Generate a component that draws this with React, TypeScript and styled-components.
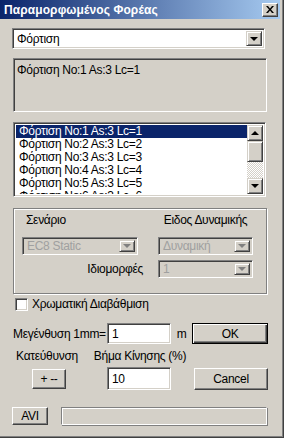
import styled, { createGlobalStyle } from 'styled-components';

const GlobalStyle = createGlobalStyle`
  html, body {
    margin: 0;
    padding: 0;
    background: #D4D0C8;
  }
  * {
    box-sizing: border-box;
  }
`

const Window = styled.div`
  width: 284px;
  height: 438px;
  background: #D4D0C8;
  font-family: "Liberation Sans", Arial, sans-serif;
  font-size: 12px;
  letter-spacing: -0.3px;
  color: #000;
  border-right: 1px solid #404040;
  border-bottom: 1px solid #404040;
  box-shadow: inset -1px -1px 0 #808080;
  padding: 0 3px 3px 0;
  display: flex;
  flex-direction: column;
  overflow: hidden;
`

const TitleBar = styled.div`
  height: 19px;
  width: 280px;
  background: linear-gradient(to right, #0A246A, #A6CAF0);
  display: flex;
  align-items: center;
  justify-content: space-between;
  padding: 0 2px 0 4px;
`

const TitleText = styled.span`
  color: #fff;
  font-weight: bold;
  font-size: 12px;
  letter-spacing: 0.1px;
`

const CloseButton = styled.div`
  width: 16px;
  height: 14px;
  background: #D4D0C8;
  border-top: 1px solid #fff;
  border-left: 1px solid #fff;
  border-right: 1px solid #404040;
  border-bottom: 1px solid #404040;
  box-shadow: inset -1px -1px 0 #808080;
  display: flex;
  align-items: center;
  justify-content: center;
`

const Body = styled.div`
  flex: 1;
  padding: 0 12px 0 12px;
  display: flex;
  flex-direction: column;
`

const Sunken = styled.div<{ $bg?: string }>`
  background: ${p => p.$bg || '#fff'};
  border-top: 1px solid #808080;
  border-left: 1px solid #808080;
  border-right: 1px solid #fff;
  border-bottom: 1px solid #fff;
  box-shadow: inset 1px 1px 0 #404040, inset -1px -1px 0 #D4D0C8;
`

const Combo = styled(Sunken)<{ $w: string; $h: number; $top?: number; $disabled?: boolean }>`
  width: ${p => p.$w};
  height: ${p => p.$h}px;
  margin-top: ${p => p.$top || 0}px;
  background: ${p => (p.$disabled ? '#D4D0C8' : '#fff')};
  color: ${p => (p.$disabled ? '#A0A0A0' : '#000')};
  display: flex;
  align-items: center;
  padding: 2px;
`

const ComboText = styled.span`
  flex: 1;
  padding-left: 2px;
  white-space: nowrap;
  overflow: hidden;
`

const ArrowButton = styled.div`
  width: 16px;
  height: 100%;
  background: #D4D0C8;
  border-top: 1px solid #D4D0C8;
  border-left: 1px solid #D4D0C8;
  border-right: 1px solid #404040;
  border-bottom: 1px solid #404040;
  box-shadow: inset 1px 1px 0 #fff, inset -1px -1px 0 #808080;
  display: flex;
  align-items: center;
  justify-content: center;
  flex-shrink: 0;
`

const Triangle = styled.div<{ $up?: boolean; $disabled?: boolean }>`
  width: 0;
  height: 0;
  border-left: 4px solid transparent;
  border-right: 4px solid transparent;
  ${p => (p.$up ? 'border-bottom' : 'border-top')}: 4px solid ${p => (p.$disabled ? '#808080' : '#000')};
`

const StaticBox = styled(Sunken)`
  height: 54px;
  margin-top: 9px;
  margin-left: 1px;
  margin-right: 1px;
  padding: 4px 3px;
`

const ListBox = styled(Sunken)`
  height: 75px;
  margin-top: 10px;
  margin-left: 1px;
  margin-right: 2px;
  padding: 2px;
  display: flex;
  overflow: hidden;
`

const ListItems = styled.div`
  flex: 1;
  overflow: hidden;
`

const ListItem = styled.div<{ $selected?: boolean }>`
  height: 13px;
  line-height: 13px;
  padding-left: 3px;
  white-space: nowrap;
  background: ${p => (p.$selected ? '#0A246A' : 'transparent')};
  color: ${p => (p.$selected ? '#fff' : '#000')};
`

const ScrollBar = styled.div`
  width: 16px;
  display: flex;
  flex-direction: column;
  background-color: #fff;
  background-image: repeating-conic-gradient(#D4D0C8 0 25%, #fff 0 50%);
  background-size: 2px 2px;
`

const ScrollButton = styled.div<{ $h: number }>`
  height: ${p => p.$h}px;
  background: #D4D0C8;
  border-top: 1px solid #D4D0C8;
  border-left: 1px solid #D4D0C8;
  border-right: 1px solid #404040;
  border-bottom: 1px solid #404040;
  box-shadow: inset 1px 1px 0 #fff, inset -1px -1px 0 #808080;
  display: flex;
  align-items: center;
  justify-content: center;
`

const ScrollTrack = styled.div`
  flex: 1;
`

const GroupBox = styled.div`
  margin-top: 11px;
  margin-left: 1px;
  margin-right: 1px;
  height: 86px;
  border: 1px solid #808080;
  box-shadow: 1px 1px 0 #fff, inset 1px 1px 0 #fff;
  padding: 4px 0 0 8px;
  display: flex;
  flex-direction: column;
`

const GroupRow = styled.div<{ $top?: number }>`
  display: flex;
  align-items: center;
  margin-top: ${p => p.$top || 0}px;
`

const GroupCell = styled.div<{ $w: number; $align?: string }>`
  width: ${p => p.$w}px;
  text-align: ${p => p.$align || 'left'};
  white-space: nowrap;
`

const Gap = styled.div<{ $w: number }>`
  width: ${p => p.$w}px;
  flex-shrink: 0;
`

const CheckRow = styled.div`
  display: flex;
  align-items: center;
  margin-top: 3px;
  padding-left: 3px;
  gap: 4px;
`

const CheckBox = styled(Sunken)`
  width: 13px;
  height: 13px;
`

const Row = styled.div<{ $top: number }>`
  display: flex;
  align-items: center;
  margin-top: ${p => p.$top}px;
`

const Label = styled.span<{ $w?: number; $align?: string; $pl?: number }>`
  width: ${p => (p.$w ? `${p.$w}px` : 'auto')};
  padding-left: ${p => p.$pl || 0}px;
  text-align: ${p => p.$align || 'left'};
  white-space: nowrap;
  flex-shrink: 0;
`

const TextInput = styled(Sunken)<{ $h: number }>`
  width: 65px;
  height: ${p => p.$h}px;
  padding: 2px 4px;
  display: flex;
  align-items: center;
`

const Button = styled.div<{ $w: number; $h: number; $default?: boolean }>`
  width: ${p => p.$w}px;
  height: ${p => p.$h}px;
  background: #D4D0C8;
  display: flex;
  align-items: center;
  justify-content: center;
  flex-shrink: 0;
  font-size: 12px;
  ${p =>
    p.$default
      ? `border: 1px solid #000;
         box-shadow: inset 1px 1px 0 #fff, inset -1px -1px 0 #404040, inset -2px -2px 0 #808080;`
      : `border-top: 1px solid #fff;
         border-left: 1px solid #fff;
         border-right: 1px solid #404040;
         border-bottom: 1px solid #404040;
         box-shadow: inset -1px -1px 0 #808080;`}
`

const ProgressBox = styled.div`
  flex: 1;
  height: 18px;
  margin-left: 13px;
  border-top: 1px solid #808080;
  border-left: 1px solid #808080;
  border-right: 1px solid #fff;
  border-bottom: 1px solid #fff;
  box-shadow: inset 1px 1px 0 #fff, 1px 1px 0 #808080;
  margin-right: 1px;
`

const loads = [1, 2, 3, 4, 5, 6]

const App = () => {
  return (
    <>
      <GlobalStyle />
      <Window>
        <TitleBar>
          <TitleText>Παραμορφωμένος Φορέας</TitleText>
          <CloseButton>
            <svg width="8" height="7" viewBox="0 0 8 7">
              <path d="M0 0h2l2 2.5L6 0h2L5 3.5 8 7H6L4 4.5 2 7H0l3-3.5z" fill="#000" />
            </svg>
          </CloseButton>
        </TitleBar>
        <Body>
          <Combo $w="253px" $h={21} $top={9}>
            <ComboText>Φόρτιση</ComboText>
            <ArrowButton>
              <Triangle />
            </ArrowButton>
          </Combo>

          <StaticBox $bg="#D4D0C8">Φόρτιση No:1 As:3 Lc=1</StaticBox>

          <ListBox>
            <ListItems>
              {loads.map(n => (
                <ListItem key={n} $selected={n === 1}>
                  Φόρτιση No:{n} As:3 Lc={n}
                </ListItem>
              ))}
            </ListItems>
            <ScrollBar>
              <ScrollButton $h={16}>
                <Triangle $up />
              </ScrollButton>
              <ScrollButton $h={21} />
              <ScrollTrack />
              <ScrollButton $h={16}>
                <Triangle />
              </ScrollButton>
            </ScrollBar>
          </ListBox>

          <GroupBox>
            <GroupRow>
              <GroupCell $w={116} $align="left">
                <Label $pl={4}>Σενάριο</Label>
              </GroupCell>
              <Gap $w={20} />
              <GroupCell $w={95} $align="center">Ειδος Δυναμικής</GroupCell>
            </GroupRow>
            <GroupRow $top={10}>
              <Combo $w="116px" $h={18} $disabled>
                <ComboText>EC8 Static</ComboText>
                <ArrowButton>
                  <Triangle $disabled />
                </ArrowButton>
              </Combo>
              <Gap $w={20} />
              <Combo $w="95px" $h={18} $disabled>
                <ComboText>Δυναμική</ComboText>
                <ArrowButton>
                  <Triangle $disabled />
                </ArrowButton>
              </Combo>
            </GroupRow>
            <GroupRow $top={5}>
              <GroupCell $w={121} $align="right">Ιδιομορφές</GroupCell>
              <Gap $w={15} />
              <Combo $w="95px" $h={18} $disabled>
                <ComboText>1</ComboText>
                <ArrowButton>
                  <Triangle $disabled />
                </ArrowButton>
              </Combo>
            </GroupRow>
          </GroupBox>

          <CheckRow>
            <CheckBox />
            <span>Χρωματική Διαβάθμιση</span>
          </CheckRow>

          <Row $top={12}>
            <Label $w={95} $pl={1}>Μεγένθυση 1mm=</Label>
            <TextInput $h={21}>1</TextInput>
            <Label $w={21} $align="center">m</Label>
            <Button $w={76} $h={21} $default>OK</Button>
          </Row>

          <Row $top={5}>
            <Label $w={70} $align="center">Κατεύθυνση</Label>
            <Label $w={116} $align="center">Βήμα Κίνησης (%)</Label>
          </Row>

          <Row $top={4}>
            <Gap $w={20} />
            <Button $w={34} $h={20}>+ --</Button>
            <Gap $w={41} />
            <TextInput $h={23}>10</TextInput>
            <Gap $w={23} />
            <Button $w={74} $h={22}>Cancel</Button>
          </Row>

          <Row $top={17}>
            <Button $w={36} $h={18}>AVI</Button>
            <ProgressBox />
          </Row>
        </Body>
      </Window>
    </>
  )
}

export default App;
